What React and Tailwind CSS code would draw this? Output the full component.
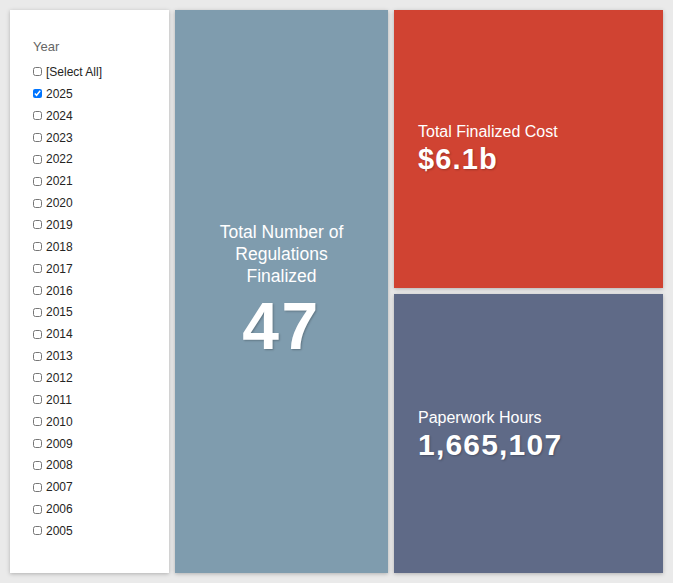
const years = ['2025', '2024', '2023', '2022', '2021', '2020', '2019', '2018', '2017', '2016', '2015', '2014', '2013', '2012', '2011', '2010', '2009', '2008', '2007', '2006', '2005']

function YearRow({ label, checked }) {
  return (
    <label className="flex items-center gap-[4px] h-[21.86px] text-[12px] text-[#252423]">
      <input type="checkbox" defaultChecked={checked} className="w-[9px] h-[9px] m-0" />
      <span>{label}</span>
    </label>
  )
}

export default function App() {
  return (
    <div className="w-[673px] h-[583px] bg-[#eaeaea] p-[10px] flex gap-[6px] font-['Liberation_Sans',Arial,sans-serif]">
      {/* Slicer */}
      <div className="w-[159px] bg-white shadow-[0_1px_4px_rgba(0,0,0,0.25)] pt-[28px] pl-[23px]">
        <div className="text-[13px] leading-[18px] text-[#666666]">Year</div>
        <div className="mt-[5px] flex flex-col">
          <YearRow label="[Select All]" />
          {years.map((y) => (
            <YearRow key={y} label={y} checked={y === '2025'} />
          ))}
        </div>
      </div>

      {/* Total regulations */}
      <div className="w-[213px] bg-[#7f9cae] shadow-[0_1px_4px_rgba(0,0,0,0.25)] flex flex-col items-center justify-center text-white text-center">
        <div className="pb-[4px] flex flex-col items-center">
          <div className="text-[17.5px] leading-[22px] px-4">
            Total Number of<br />Regulations<br />Finalized
          </div>
          <div className="mt-[6px] text-[66px] leading-none font-bold tracking-[0.04em] [text-shadow:1px_1px_2px_rgba(0,0,0,0.25)]">47</div>
        </div>
      </div>

      {/* Right cards */}
      <div className="w-[269px] flex flex-col gap-[6px]">
        <div className="h-[278px] bg-[#d04332] shadow-[0_1px_4px_rgba(0,0,0,0.25)] flex flex-col justify-center pl-[24px] text-white">
          <div className="pb-[2px]">
            <div className="text-[16px] leading-[20px]">Total Finalized Cost</div>
            <div className="mt-[3px] text-[29px] leading-none font-bold tracking-[0.04em] [text-shadow:1px_1px_2px_rgba(0,0,0,0.25)]">$6.1b</div>
          </div>
        </div>
        <div className="h-[279px] bg-[#5f6a87] shadow-[0_1px_4px_rgba(0,0,0,0.25)] flex flex-col justify-center pl-[24px] text-white">
          <div>
            <div className="text-[16px] leading-[20px]">Paperwork Hours</div>
            <div className="mt-[2px] text-[30px] leading-none font-bold tracking-[0.04em] [text-shadow:1px_1px_2px_rgba(0,0,0,0.25)]">1,665,107</div>
          </div>
        </div>
      </div>
    </div>
  )
}
